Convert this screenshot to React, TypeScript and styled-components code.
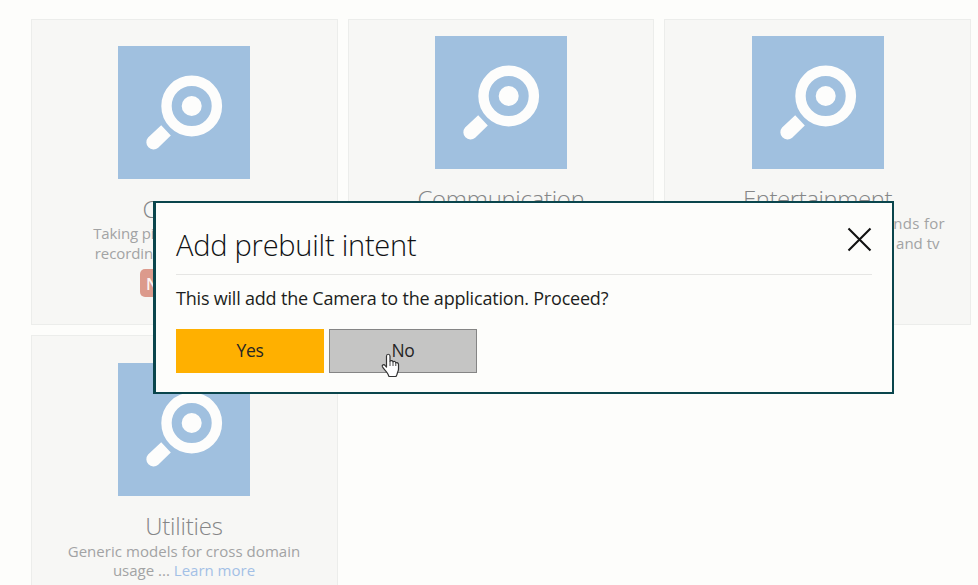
import React from "react";
import styled, { createGlobalStyle } from "styled-components";

const Global = createGlobalStyle`
  * { box-sizing: border-box; }
  html, body { margin: 0; height: 100%; overflow: hidden; background: #fdfdfb; }
  body { font-family: "Open Sans", "Noto Sans", sans-serif; }
`;

const Page = styled.main`
  position: relative;
  width: 978px;
  height: 585px;
  overflow: hidden;
`;

const Grid = styled.div`
  display: grid;
  grid-template-columns: 307px 306px 307px;
  grid-auto-rows: 306.5px;
  gap: 10px;
  padding: 18.5px 0 0 31px;
`;

const Card = styled.section<{ $top: number; $inset: number }>`
  display: flex;
  flex-direction: column;
  align-items: center;
  padding-top: ${(p) => p.$top}px;
  padding-right: ${(p) => p.$inset}px;
  background: #f7f7f5;
  border: 1px solid #ecedeb;
`;

const Tile = styled.div`
  flex: none;
  width: 132px;
  height: 133px;
  background: #a0c0df;
  svg { display: block; }
`;

const Name = styled.h2<{ $spacing: number }>`
  margin: 13px 0 0;
  height: 32.5px;
  font-size: 24px;
  line-height: 34px;
  font-weight: 300;
  color: #858687;
  white-space: nowrap;
  letter-spacing: ${(p) => p.$spacing}px;
`;

const Line = styled.p<{ $spacing: number }>`
  margin: 0;
  height: 19.7px;
  font-size: 15px;
  line-height: 19.7px;
  color: #a2a3a4;
  white-space: nowrap;
  letter-spacing: ${(p) => p.$spacing}px;
`;

const Link = styled.a`
  color: #a3c0e6;
`;

const Badge = styled.span`
  margin-top: 6px;
  width: 88px;
  height: 28px;
  padding-left: 6px;
  border-radius: 5px;
  background: #dc9a8c;
  color: #fdf3f1;
  font-size: 16px;
  font-weight: 600;
  line-height: 30px;
`;

const Dialog = styled.div`
  position: absolute;
  left: 153px;
  top: 201px;
  width: 741px;
  height: 193px;
  padding: 17px 20px 0;
  border: 3px solid #0a454c;
  border-width: 2px 2px 2px 3px;
  background: #fdfdfb;
  color: #1c1d20;
`;

const Header = styled.header`
  display: flex;
  justify-content: space-between;
  height: 55px;
  width: 696px;
  border-bottom: 1px solid #e6e6e4;
`;

const Title = styled.h1`
  margin: 5px 0 0;
  font-size: 29px;
  font-weight: 300;
  line-height: 40px;
  letter-spacing: -0.23px;
  color: #101114;
`;

const Close = styled.button`
  width: 25px;
  height: 25px;
  margin-top: 7px;
  padding: 0;
  border: 0;
  background: none;
  svg { display: block; }
`;

const Message = styled.p`
  margin: 11px 0 0;
  font-size: 18px;
  line-height: 24px;
  letter-spacing: -0.2px;
  white-space: nowrap;
`;

const Actions = styled.div`
  display: flex;
  gap: 5px;
  margin-top: 19px;
`;

const Button = styled.button<{ $primary?: boolean }>`
  width: 148px;
  height: 44px;
  padding: 0 0 2px;
  border: 1px solid ${(p) => (p.$primary ? "#ffb000" : "#858585")};
  background: ${(p) => (p.$primary ? "#ffb000" : "#c5c5c4")};
  font: 400 17.5px "Open Sans", sans-serif;
  letter-spacing: -0.3px;
  color: #252525;
`;

const Cursor = styled.svg`
  position: absolute;
  left: 381px;
  top: 352px;
`;

const Magnifier = () => (
  <Tile>
    <svg width="132" height="133" viewBox="0 0 132 133">
      <circle cx="73.7" cy="60" r="25.2" fill="none" stroke="#fdfdfc" strokeWidth="10.4" />
      <circle cx="73.7" cy="60" r="10" fill="#fdfdfc" />
      <path d="M43.2 79.3 52.8 89.6 40.2 101.8A7.2 7.2 0 0 1 30.1 91.6Z" fill="#fdfdfc" />
    </svg>
  </Tile>
);

type Item = {
  name: string;
  spacing: number;
  top: number;
  inset: number;
  lines: { text: string; link?: string; spacing: number }[];
  badge?: string;
};

const items: Item[] = [
  {
    name: "Camera", spacing: -0.2, top: 26, inset: 1, badge: "New",
    lines: [
      { text: "Taking pictures and videos", spacing: -0.15 },
      { text: "recording it ... ", link: "Learn more", spacing: -0.1 },
    ],
  },
  { name: "Communication", spacing: -0.3, top: 16, inset: 0, lines: [] },
  {
    name: "Entertainment", spacing: -0.45, top: 16, inset: 0,
    lines: [
      { text: "Queries, search and commands for", spacing: 0.3 },
      { text: "games, music, movies, radio and tv", spacing: 0 },
    ],
  },
  {
    name: "Utilities", spacing: -0.2, top: 27, inset: 1,
    lines: [
      { text: "Generic models for cross domain", spacing: 0.04 },
      { text: "usage ... ", link: "Learn more", spacing: 0 },
    ],
  },
];

export default function App() {
  return (
    <Page>
      <Global />
      <Grid>
        {items.map((item) => (
          <Card key={item.name} $top={item.top} $inset={item.inset}>
            <Magnifier />
            <Name $spacing={item.spacing}>{item.name}</Name>
            {item.lines.map((l) => (
              <Line key={l.text} $spacing={l.spacing}>
                {l.text}
                {l.link && <Link>{l.link}</Link>}
              </Line>
            ))}
            {item.badge && <Badge>{item.badge}</Badge>}
          </Card>
        ))}
      </Grid>
      <Dialog role="dialog">
        <Header>
          <Title>Add prebuilt intent</Title>
          <Close aria-label="Close">
            <svg width="25" height="25" viewBox="0 0 25 25">
              <path d="M1.5 1.5 23.5 23.5M23.5 1.5 1.5 23.5" stroke="#111" strokeWidth="2.1" />
            </svg>
          </Close>
        </Header>
        <Message>This will add the Camera to the application. Proceed?</Message>
        <Actions>
          <Button $primary>Yes</Button>
          <Button>No</Button>
        </Actions>
      </Dialog>
      <Cursor width="19" height="26" viewBox="0 0 19 26">
        <path
          d="M5.5 15V4.2C5.5 1.6 9 1.6 9 4.2V9.2C10 8.1 11.7 8.5 12 9.8 13.1 8.9 14.6 9.5 14.8 10.8 16.2 10.2 17.5 11 17.5 12.6V17C17.5 19 16.2 20.5 16 22.5L15 24.5H8L7 22.2C5.8 19.5 2.8 17.3 1.4 14.8 .6 13 3 12 4 13.3Z"
          fill="#fff" stroke="#333" strokeWidth="1.2" strokeLinejoin="round"
        />
        <path d="M9 9V14M12 10V14M14.8 11V14" stroke="#444" strokeWidth="1" fill="none" />
      </Cursor>
    </Page>
  );
}
